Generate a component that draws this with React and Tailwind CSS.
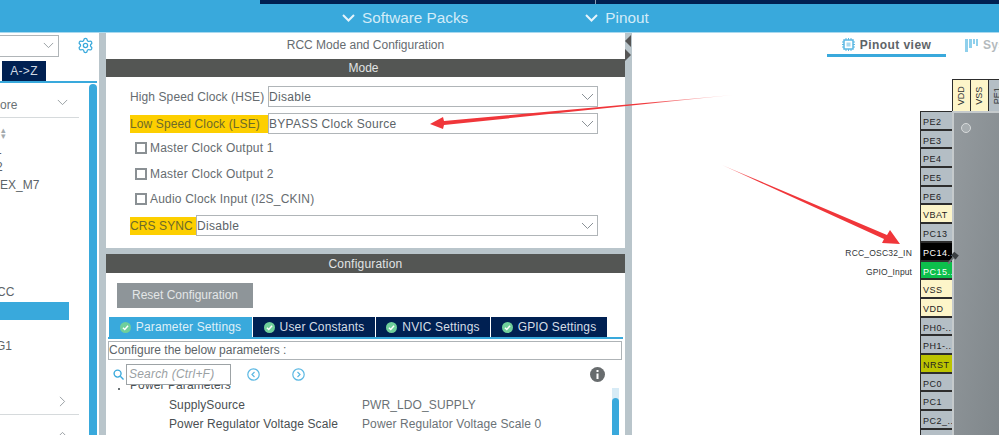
import React from 'react';
import { Settings } from 'lucide-react';

const font = { fontFamily: '"Liberation Sans", Arial, sans-serif' };

const Chevron = ({ className = 'w-[13px] h-[8px]', stroke = '#8a9196', sw = 1 }) => (
  <svg className={className} viewBox="0 0 13 8" fill="none" stroke={stroke} strokeWidth={sw}>
    <path d="M1 1l5.500 5.500L12 1" />
  </svg>
);

const Select = ({ value, className = '' }) => (
  <div className={`h-[21px] flex items-center justify-between border border-[#b0b5b8] bg-white pr-[3px] text-[12px] text-[#5c6468] tracking-[0.3px] ${className}`}>
    <span>{value}</span>
    <Chevron />
  </div>
);

const Check = ({ label, mt }) => (
  <div className={`flex items-center gap-[3px] pl-[29px] h-[14px] text-[12px] text-[#666c70] tracking-[0.2px] ${mt}`}>
    <span className="w-[12px] h-[12px] border-2 border-[#8a9094] bg-white" />
    <span>{label}</span>
  </div>
);

const TabCheck = () => (
  <svg className="w-[11px] h-[11px] shrink-0" viewBox="0 0 12 12">
    <circle cx="6" cy="6" r="6" fill="#6fcf9b" />
    <path d="M3.200 6.200l2 2 3.600-4" fill="none" stroke="#fff" strokeWidth="1.600" />
  </svg>
);

const Tab = ({ label, w, active }) => (
  <div className={`flex items-center justify-center gap-[5px] h-[20px] text-[12px] tracking-[0.15px] ${w} ${active ? 'bg-[#39a9dc] text-[#dff0f8]' : 'bg-[#002052] text-[#d5dde6]'}`}>
    <TabCheck />
    <span>{label}</span>
  </div>
);

const CircleArrow = ({ d }) => (
  <svg className="w-[13px] h-[13px]" viewBox="0 0 13 13" fill="none" stroke="#5bb8e3" strokeWidth="1.200">
    <circle cx="6.500" cy="6.500" r="5.700" />
    <path d={d} />
  </svg>
);

const pins = [
  { n: 'PE2' }, { n: 'PE3' }, { n: 'PE4' }, { n: 'PE5' }, { n: 'PE6' },
  { n: 'VBAT', c: 'bg-[#fdf5c9] text-[#1f2224]' },
  { n: 'PC13' },
  { n: 'PC14..', c: 'bg-black text-white' },
  { n: 'PC15..', c: 'bg-[#0dbf4c] text-white' },
  { n: 'VSS', c: 'bg-[#fdf5c9] text-[#1f2224]' },
  { n: 'VDD', c: 'bg-[#fdf5c9] text-[#1f2224]' },
  { n: 'PH0-..' }, { n: 'PH1-..' },
  { n: 'NRST', c: 'bg-[#bcc400] text-[#1f2224]' },
  { n: 'PC0' }, { n: 'PC1' }, { n: 'PC2_..' }, { n: '' },
];

const Left = () => (
  <div className="w-[99px] shrink-0 relative text-[12px] text-[#5c6468] overflow-hidden">
    <div className="flex items-center pt-[1px] h-[24px]">
      <div className="w-[59px] h-[22px] border border-l-0 border-[#b0b5b8] flex items-center justify-end pr-[4px] shrink-0">
        <Chevron className="w-[11px] h-[7px]" />
      </div>
      <Settings className="w-[17px] h-[17px] ml-[18px] text-[#39a9dc] shrink-0" strokeWidth={1.800} />
    </div>
    <div className="mt-[4px] ml-[2px] w-[44px] h-[20px] bg-[#002052] text-[#cfd8e2] flex items-center justify-center tracking-[0.3px]">A-&gt;Z</div>
    <div className="h-[2px] w-[97px] bg-[#39a9dc]" />
    <div className="absolute right-[2px] top-[51px] bottom-0 w-[8px] bg-[#39a9dc] rounded-t-[4px]" />
    <div className="w-[79px] h-[35px] border-b border-[#d6dadc] flex items-center justify-between pr-[11px] pt-[9px] text-[#6a7175]">
      <span>ore</span>
      <Chevron className="w-[11px] h-[7px] -mt-[4px]" />
    </div>
    <div className="h-[24px] pl-[1px] pt-[9px] leading-[6px] text-[#a4aaad] text-[9px]">▴<br />▾</div>
    <div className="h-[17px] leading-[17px] -ml-[5px]">1</div>
    <div className="h-[17px] leading-[17px] -ml-[4px]">2</div>
    <div className="h-[18px] leading-[18px]">EX_M7</div>
    <div className="h-[108px] leading-[196px] -ml-[3px]">CC</div>
    <div className="w-[69px] h-[18px] bg-[#39a9dc]" />
    <div className="h-[45px] pt-[19px] leading-[14px] -ml-[4px]">G1</div>
    <div className="w-[79px] h-[50px] border-b border-[#d6dadc] flex items-center justify-end pr-[11px] pt-[24px]">
      <Chevron className="w-[11px] h-[7px] -rotate-90" />
    </div>
    <div className="w-[79px] flex justify-end pr-[11px] pt-[16px]">
      <Chevron className="w-[11px] h-[7px] rotate-180" />
    </div>
  </div>
);

const Center = () => (
  <div className="w-[519px] shrink-0 flex flex-col text-[#5c6468]">
    <div className="bg-white">
      <div className="h-[26px] leading-[24px] text-center text-[12px] text-[#666c70]">RCC Mode and Configuration</div>
      <div className="h-[18px] leading-[18px] bg-[#545654] pr-[4px] text-center text-[12px] text-[#e1e4e4]">Mode</div>
      <div className="h-[171px] pt-[9px]">
        <div className="flex items-center pl-[24px]">
          <span className="w-[138px] text-[12px] text-[#666c70] tracking-[0.1px] whitespace-nowrap">High Speed Clock (HSE)</span>
          <Select value="Disable" className="w-[330px]" />
        </div>
        <div className="flex items-center pl-[24px] mt-[6px]">
          <span className="w-[138px] h-[18px] leading-[18px] bg-[#fdcf00] text-[12px] text-[#6d6a2a] tracking-[0.12px] whitespace-nowrap">Low Speed Clock (LSE)</span>
          <Select value="BYPASS Clock Source" className="w-[330px]" />
        </div>
        <Check label="Master Clock Output 1" mt="mt-[7px]" />
        <Check label="Master Clock Output 2" mt="mt-[12px]" />
        <Check label="Audio Clock Input (I2S_CKIN)" mt="mt-[11px]" />
        <div className="flex items-center pl-[24px] mt-[9px]">
          <span className="w-[66px] h-[18px] leading-[18px] bg-[#fdcf00] text-[12px] text-[#6d6a2a] tracking-[0.1px] whitespace-nowrap">CRS SYNC</span>
          <Select value="Disable" className="w-[402px]" />
        </div>
      </div>
    </div>
    <div className="h-[6px] bg-[#b9c5cb]" />
    <div className="bg-white flex-1 relative">
      <div className="h-[19px] leading-[20px] bg-[#545654] text-center text-[12px] text-[#e1e4e4] tracking-[0.2px]">Configuration</div>
      <div className="ml-[11px] mt-[10px] w-[136px] h-[25px] bg-[#8e9599] text-center leading-[25px] text-[12px] text-[#e3e6e7]">Reset Configuration</div>
      <div className="mt-[9px] ml-[3px] flex gap-[1px]">
        <Tab label="Parameter Settings" w="w-[143px]" active />
        <Tab label="User Constants" w="w-[122px]" />
        <Tab label="NVIC Settings" w="w-[114px]" />
        <Tab label="GPIO Settings" w="w-[116px]" />
      </div>
      <div className="ml-[2px] w-[515px] h-[2px] bg-[#39a9dc]" />
      <div className="ml-[2px] mt-[2px] w-[514px] h-[19px] border border-[#aeb3b6] leading-[17px] text-[12px] text-[#5c6468]">Configure the below parameters :</div>
      <div className="flex items-center h-[22px] mt-[3px] ml-[7px]">
        <svg className="w-[11px] h-[11px] text-[#39a9dc] shrink-0" viewBox="0 0 12 12" fill="none" stroke="currentColor" strokeWidth="1.500">
          <circle cx="5" cy="5" r="3.800" />
          <path d="M8 8l3.500 3.500" />
        </svg>
        <div className="ml-[2px] w-[105px] h-[21px] border border-[#9da3a6] pl-[2px] leading-[19px] italic text-[12px] text-[#9aa0a3] tracking-[0.2px] shrink-0">Search (Ctrl+F)</div>
        <div className="ml-[16px]"><CircleArrow d="M7.500 4L5 6.500 7.500 9" /></div>
        <div className="ml-[32px]"><CircleArrow d="M5.500 4L8 6.500 5.500 9" /></div>
        <svg className="w-[15px] h-[15px] ml-[285px]" viewBox="0 0 15 15">
          <circle cx="7.500" cy="7.500" r="7.500" fill="#686c6e" />
          <rect x="6.500" y="6.500" width="2" height="5.500" fill="#fff" />
          <rect x="6.500" y="3" width="2" height="2" fill="#fff" />
        </svg>
      </div>
      <div className="relative h-[50px] overflow-hidden text-[12px] tracking-[0.1px]">
        <div className="absolute left-[12px] top-[3px] w-[2px] h-[2px] bg-[#6b7276]" />
        <div className="absolute left-[6px] top-[-7px] whitespace-nowrap text-[#4a4f52] leading-[14px] pl-[18px]">Power Parameters</div>
        <div className="absolute right-[6px] top-[3px] bottom-0 w-[7px] bg-[#d7ebf6]">
          <div className="mt-[10px] h-[40px] bg-[#39a9dc] rounded-t-[4px]" />
        </div>
        <div className="flex pl-[63px] pt-[13px] h-[32px] leading-[14px]">
          <span className="w-[193px] text-[#4a4f52]">SupplySource</span>
          <span className="text-[#6b7276]">PWR_LDO_SUPPLY</span>
        </div>
        <div className="flex pl-[63px] h-[14px] leading-[14px]">
          <span className="w-[193px] text-[#4a4f52]">Power Regulator Voltage Scale</span>
          <span className="text-[#6b7276]">Power Regulator Voltage Scale 0</span>
        </div>
      </div>
    </div>
  </div>
);

const Right = () => (
  <div className="flex-1 bg-white relative overflow-hidden">
    <div className="flex h-[46px] pl-[195px] pt-[3px]">
      <div className="w-[119px] h-[21px] border-b-[3px] border-[#39a9dc] flex items-center justify-center gap-[5px] pb-[1px] text-[12px] font-bold text-[#5e6468] tracking-[0.45px] shrink-0">
        <svg className="w-[13px] h-[13px]" viewBox="0 0 13 13" fill="none" stroke="#5bb8e3">
          <rect x="2" y="2" width="9" height="9" strokeWidth="1.500" />
          <rect x="4.500" y="4.500" width="4" height="4" fill="#a9d9ef" stroke="none" />
          <path d="M4 0v2M6.500 0v2M9 0v2M4 11v2M6.500 11v2M9 11v2M0 4h2M0 6.500h2M0 9h2M11 4h2M11 6.500h2M11 9h2" strokeWidth="1" />
        </svg>
        <span>Pinout view</span>
      </div>
      <div className="ml-[19px] flex items-center gap-[5px] h-[18px] text-[12px] font-bold text-[#b4babd] tracking-[0.3px]">
        <svg className="w-[13px] h-[13px] shrink-0" viewBox="0 0 13 13" fill="#8fd0ec">
          <rect x="0" y="0" width="3" height="13" />
          <rect x="4" y="0" width="3" height="9" />
          <rect x="8" y="0" width="2" height="5" />
          <rect x="11" y="0" width="2" height="7" />
        </svg>
        <span>Sys</span>
      </div>
    </div>
    {/* chip */}
    <div className="flex pl-[320px]">
      <div className="flex h-[32px] border-t border-[#2d2d2d] shrink-0 text-[9px] text-[#2f3336]">
        <div className="w-[19px] bg-[#fdf5c9] border-x border-[#2d2d2d] flex items-center justify-center"><span className="-rotate-90">VDD</span></div>
        <div className="w-[18px] bg-[#fdf5c9] border-r border-[#2d2d2d] flex items-center justify-center"><span className="-rotate-90">VSS</span></div>
        <div className="w-[18px] bg-[#b4bec5] flex items-center justify-center"><span className="-rotate-90">PE1</span></div>
      </div>
    </div>
    <div className="flex pl-[288px]">
      <div className="w-[32px] shrink-0 flex flex-col">
        {pins.map((p, i) => (
          <div key={i} className={`h-[18.700px] shrink-0 border-y border-l border-[#2d2d2d] pl-[2px] pt-[1px] leading-[18px] text-[9px] tracking-[0.5px] whitespace-nowrap ${p.c || 'bg-[#b4bec5] text-[#1f2224]'}`}>
            {p.n}
          </div>
        ))}
      </div>
      <div className="w-[47px] h-[325px] shrink-0 bg-gradient-to-br from-[#949a9e] to-[#80878b] border-l-2 border-t-2 border-[#c5cacc] relative">
        <div className="absolute left-[7px] top-[10px] w-[10px] h-[10px] rounded-full bg-[#a7adb0] border border-[#d7dadb]" />
      </div>
    </div>
    <div className="absolute right-[87px] top-[214px] text-[8.500px] text-[#2f3336] tracking-[0.2px] leading-[12px] whitespace-nowrap">RCC_OSC32_IN</div>
    <div className="absolute right-[87px] top-[233px] text-[8.500px] text-[#2f3336] tracking-[0.1px] leading-[12px] whitespace-nowrap">GPIO_Input</div>
  </div>
);

export default function App() {
  return (
    <div className="w-[999px] h-[435px] overflow-hidden relative flex flex-col bg-white" style={font}>
      <div className="h-[33px] shrink-0 bg-[#39a9dc] border-b border-[#a9d9ef] flex flex-col">
        <div className="ml-[260px] h-[4px] bg-[#002052] flex">
          <div className="w-[336px] border-r border-[#8aa0b8]" />
        </div>
        <div className="flex items-center h-[28px] text-[15.300px] text-[#d3ecf8]">
          <div className="ml-[342px] flex items-center gap-[7px]">
            <Chevron className="w-[13px] h-[8px]" stroke="#e6f4fb" sw={2} />
            <span>Software Packs</span>
          </div>
          <div className="ml-[117px] flex items-center gap-[7px]">
            <Chevron className="w-[13px] h-[8px]" stroke="#e6f4fb" sw={2} />
            <span>Pinout</span>
          </div>
        </div>
      </div>
      <div className="flex flex-1 min-h-0">
        <Left />
        <div className="w-[7px] shrink-0 bg-[#b9c5cb]" />
        <Center />
        <div className="w-[7px] shrink-0 bg-[#b9c5cb] relative">
          <div className="absolute left-0 top-[2px] w-0 h-0 border-y-[6px] border-y-transparent border-r-[6px] border-r-[#555]" />
          <div className="absolute left-0 top-[16px] w-0 h-0 border-y-[6px] border-y-transparent border-l-[6px] border-l-[#555]" />
        </div>
        <Right />
      </div>

      {/* red annotation arrows and the pin marker on top of the shot */}
      <svg className="absolute inset-0 pointer-events-none" width="999" height="435" viewBox="0 0 999 435">
        <defs>
          <linearGradient id="a1" x1="733" y1="95" x2="430" y2="124" gradientUnits="userSpaceOnUse">
            <stop offset="0" stopColor="#f0363a" stopOpacity="0.15" />
            <stop offset="0.3" stopColor="#f0363a" />
          </linearGradient>
          <linearGradient id="a2" x1="722" y1="165" x2="900" y2="243" gradientUnits="userSpaceOnUse">
            <stop offset="0" stopColor="#f0363a" stopOpacity="0.4" />
            <stop offset="0.2" stopColor="#f0363a" />
          </linearGradient>
        </defs>
        <polygon points="733,95 444,121 443,117 430,124 443,129 444,125" fill="url(#a1)" />
        <polygon points="722,165 884,239 882,243 900,244 890,230 887,235" fill="url(#a2)" />
        <g transform="translate(952 259) rotate(40)">
          <rect x="-3" y="-7" width="6" height="5" fill="#3a3f42" />
          <rect x="-1" y="-2" width="2" height="8" fill="#6c7275" />
        </g>
      </svg>
    </div>
  );
}
